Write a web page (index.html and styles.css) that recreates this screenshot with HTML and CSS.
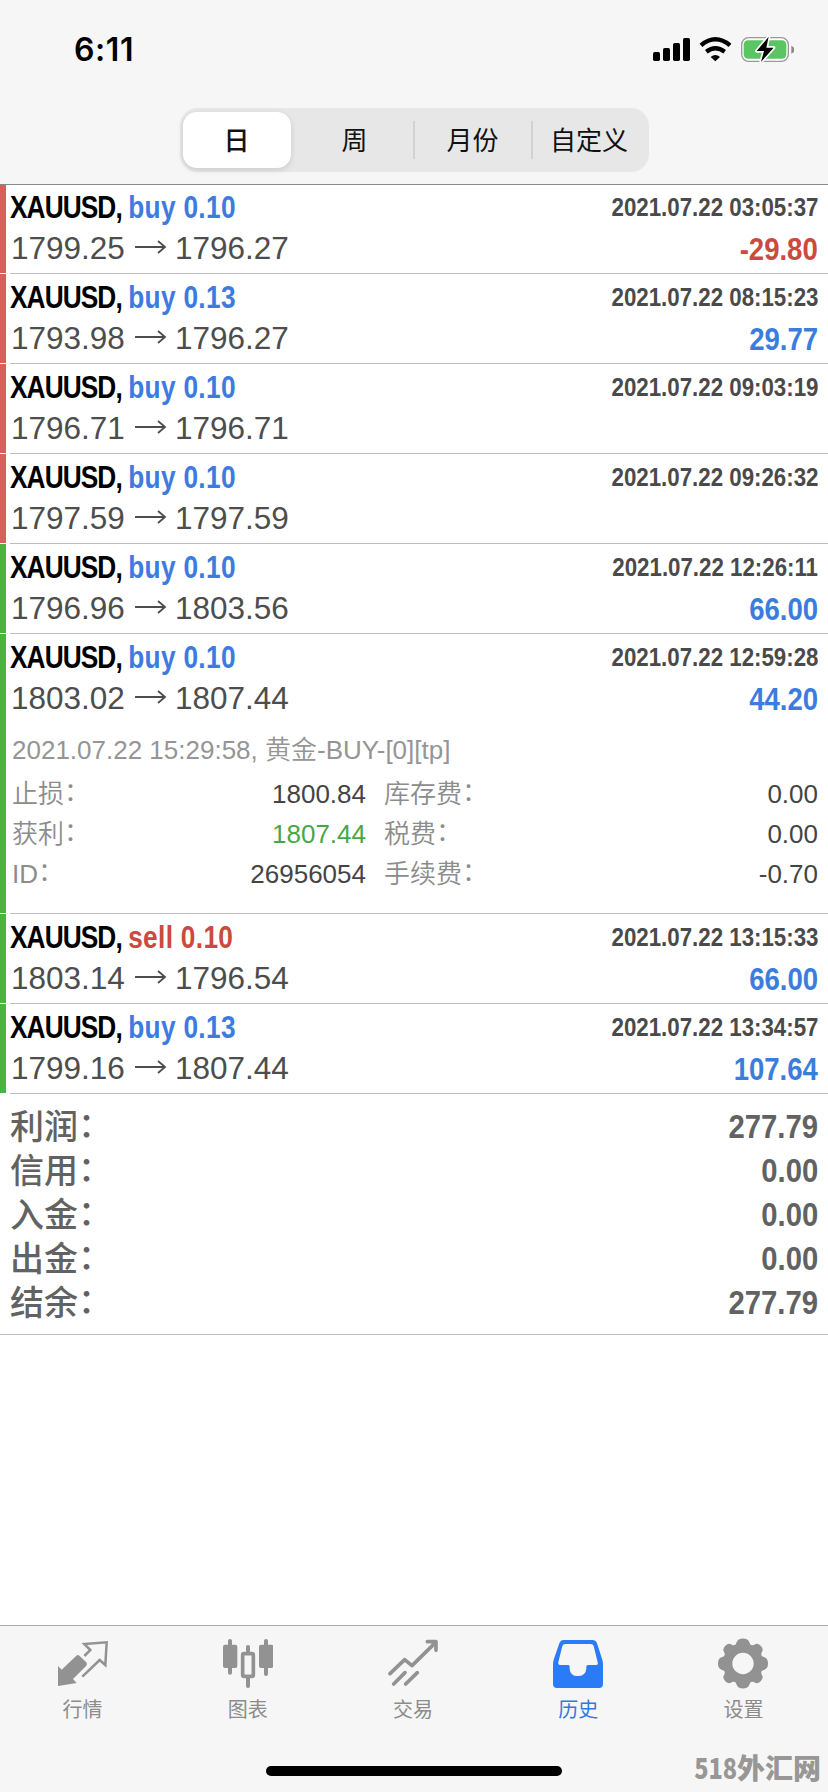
FILE: index.html
```html
<!DOCTYPE html>
<html lang="zh-CN">
<head>
<meta charset="utf-8">
<title>历史</title>
<link rel="stylesheet" href="styles.css">
</head>
<body>
<div class="app">
  <header class="header">
    <div class="status">
      <span class="clock">6:11</span>
      <svg class="status-icons" viewBox="717 108 423 78" width="141" height="26">
        <rect x="717" y="156" width="21" height="27" rx="5"/>
        <rect x="747" y="144" width="21" height="39" rx="5"/>
        <rect x="777" y="129" width="21" height="54" rx="5"/>
        <rect x="807" y="114" width="21" height="69" rx="5"/>
        <g fill="none" stroke="#000" stroke-width="13">
          <path d="M861 136Q904 100 948 136"/>
          <path d="M877 155Q904 134 932 155"/>
        </g>
        <path d="M890 171Q904 159 918 171L904 184Z"/>
        <rect x="983" y="113" width="140" height="71" rx="21" fill="#fff" stroke="#9a989c" stroke-width="4"/>
        <rect x="989" y="121" width="128" height="55" rx="13" fill="#5bc563"/>
        <path d="M1132 137Q1141 140 1141 149Q1141 158 1132 161Z" fill="#8b898d"/>
        <path d="M1064 110L1028 153H1050L1041 186L1079 143H1057Z" stroke="#fff" stroke-width="10" stroke-linejoin="round"/>
        <path d="M1064 110L1028 153H1050L1041 186L1079 143H1057Z"/>
      </svg>
    </div>
    <nav class="segments">
      <span class="segment selected">日</span>
      <span class="segment week">周</span>
      <span class="segment divided">月份</span>
      <span class="segment divided">自定义</span>
    </nav>
  </header>

  <main class="content">
    <section class="deal loss first">
      <div class="line"><span class="symbol">XAUUSD, <b class="buy">buy 0.10</b></span><span class="time">2021.07.22 03:05:37</span></div>
      <div class="line"><span class="prices">1799.25<svg class="arrow" viewBox="0 0 32 14"><path d="M0 7H30M23 1L30 7L23 13"/></svg>1796.27</span><span class="profit negative">-29.80</span></div>
    </section>
    <section class="deal loss">
      <div class="line"><span class="symbol">XAUUSD, <b class="buy">buy 0.13</b></span><span class="time">2021.07.22 08:15:23</span></div>
      <div class="line"><span class="prices">1793.98<svg class="arrow" viewBox="0 0 32 14"><path d="M0 7H30M23 1L30 7L23 13"/></svg>1796.27</span><span class="profit">29.77</span></div>
    </section>
    <section class="deal loss">
      <div class="line"><span class="symbol">XAUUSD, <b class="buy">buy 0.10</b></span><span class="time">2021.07.22 09:03:19</span></div>
      <div class="line"><span class="prices">1796.71<svg class="arrow" viewBox="0 0 32 14"><path d="M0 7H30M23 1L30 7L23 13"/></svg>1796.71</span></div>
    </section>
    <section class="deal loss">
      <div class="line"><span class="symbol">XAUUSD, <b class="buy">buy 0.10</b></span><span class="time">2021.07.22 09:26:32</span></div>
      <div class="line"><span class="prices">1797.59<svg class="arrow" viewBox="0 0 32 14"><path d="M0 7H30M23 1L30 7L23 13"/></svg>1797.59</span></div>
    </section>
    <section class="deal">
      <div class="line"><span class="symbol">XAUUSD, <b class="buy">buy 0.10</b></span><span class="time">2021.07.22 12:26:11</span></div>
      <div class="line"><span class="prices">1796.96<svg class="arrow" viewBox="0 0 32 14"><path d="M0 7H30M23 1L30 7L23 13"/></svg>1803.56</span><span class="profit">66.00</span></div>
    </section>
    <section class="deal expanded">
      <div class="line"><span class="symbol">XAUUSD, <b class="buy">buy 0.10</b></span><span class="time">2021.07.22 12:59:28</span></div>
      <div class="line"><span class="prices">1803.02<svg class="arrow" viewBox="0 0 32 14"><path d="M0 7H30M23 1L30 7L23 13"/></svg>1807.44</span><span class="profit">44.20</span></div>
      <p class="comment">2021.07.22 15:29:58, 黄金-BUY-[0][tp]</p>
      <div class="details">
        <span class="label">止损<i>：</i></span><span class="value">1800.84</span><span class="label">库存费<i>：</i></span><span class="value">0.00</span>
        <span class="label">获利<i>：</i></span><span class="value hit">1807.44</span><span class="label">税费<i>：</i></span><span class="value">0.00</span>
        <span class="label">ID<i>：</i></span><span class="value">26956054</span><span class="label">手续费<i>：</i></span><span class="value">-0.70</span>
      </div>
    </section>
    <section class="deal">
      <div class="line"><span class="symbol">XAUUSD, <b class="sell">sell 0.10</b></span><span class="time">2021.07.22 13:15:33</span></div>
      <div class="line"><span class="prices">1803.14<svg class="arrow" viewBox="0 0 32 14"><path d="M0 7H30M23 1L30 7L23 13"/></svg>1796.54</span><span class="profit">66.00</span></div>
    </section>
    <section class="deal">
      <div class="line"><span class="symbol">XAUUSD, <b class="buy">buy 0.13</b></span><span class="time">2021.07.22 13:34:57</span></div>
      <div class="line"><span class="prices">1799.16<svg class="arrow" viewBox="0 0 32 14"><path d="M0 7H30M23 1L30 7L23 13"/></svg>1807.44</span><span class="profit">107.64</span></div>
    </section>
    <section class="totals">
      <div class="total"><span class="name">利润<i>：</i></span><span class="sum">277.79</span></div>
      <div class="total"><span class="name">信用<i>：</i></span><span class="sum">0.00</span></div>
      <div class="total"><span class="name">入金<i>：</i></span><span class="sum">0.00</span></div>
      <div class="total"><span class="name">出金<i>：</i></span><span class="sum">0.00</span></div>
      <div class="total"><span class="name">结余<i>：</i></span><span class="sum">277.79</span></div>
    </section>
  </main>

  <footer class="tabbar">
    <nav class="tabs">
      <a class="tab">
        <svg class="icon" viewBox="171 84 150 153">
          <path d="M171 168L182 179L226 137Q231 133 236 138L256 157Q260 162 256 167L216 207L227 219L171 228Z"/>
          <path d="M250 138L268 120L250 102L317 97L313 165L296 150L244 200" fill="none" stroke="#929292" stroke-width="7.500"/>
        </svg>
        <span>行情</span>
      </a>
      <a class="tab">
        <svg class="icon" viewBox="669 84 150 153">
          <rect x="669" y="104" width="43" height="70" rx="6"/><rect x="684" y="87" width="12" height="107" rx="6"/>
          <rect x="777" y="104" width="43" height="70" rx="6"/><rect x="792" y="87" width="12" height="111" rx="6"/>
          <rect x="728" y="131" width="32" height="68" rx="4" fill="none" stroke="#929292" stroke-width="11"/>
          <path d="M744 111V126M744 204V228" stroke="#929292" stroke-width="12" stroke-linecap="round"/>
        </svg>
        <span>图表</span>
      </a>
      <a class="tab">
        <svg class="icon" viewBox="1164 84 150 153">
          <g fill="none" stroke="#929292" stroke-width="11" stroke-linecap="round" stroke-linejoin="round">
            <path d="M1170 191L1214 149L1236 167L1307 97M1282 95H1308V121"/>
            <path d="M1181 222L1215 188M1217 222L1252 188"/>
          </g>
        </svg>
        <span>交易</span>
      </a>
      <a class="tab active">
        <svg class="icon" viewBox="417 84 150 153">
          <path fill-rule="evenodd" d="M449 90H535Q545 90 549 100L564 146Q567 153 567 162V222Q567 234 555 234H429Q417 234 417 222V162Q417 153 420 146L436 100Q440 90 449 90ZM454 102Q447 102 445 108L433 157Q432 165 438 165H463Q467 165 467 170V176Q468 198 491 198Q515 198 517 176V170Q517 165 522 165H547Q553 165 551 157L539 108Q537 102 530 102Z"/>
        </svg>
        <span>历史</span>
      </a>
      <a class="tab">
        <svg class="icon" viewBox="-75 -76.500 150 153">
          <path fill-rule="evenodd" d="M-18 -66Q-14 -75 0 -75Q14 -75 18 -66L22 -57Q25 -54 30 -55L40 -59Q46 -60 53 -53Q60 -46 59 -40L55 -30Q54 -25 57 -22L66 -18Q75 -14 75 0Q75 14 66 18L57 22Q54 25 55 30L59 40Q60 46 53 53Q46 60 40 59L30 55Q25 54 22 57L18 66Q14 75 0 75Q-14 75 -18 66L-22 57Q-25 54 -30 55L-40 59Q-46 60 -53 53Q-60 46 -59 40L-55 30Q-54 25 -57 22L-66 18Q-75 14 -75 0Q-75 -14 -66 -18L-57 -22Q-54 -25 -55 -30L-59 -40Q-60 -46 -53 -53Q-46 -60 -40 -59L-30 -55Q-25 -54 -22 -57ZM0 -32A32 32 0 1 0 0 32A32 32 0 1 0 0 -32Z"/>
        </svg>
        <span>设置</span>
      </a>
    </nav>
    <div class="home-indicator"></div>
    <div class="watermark"><span class="watermark-number">518</span>外汇网</div>
  </footer>
</div>
</body>
</html>
```
FILE: styles.css
```css
* { box-sizing: border-box; }
body {
  margin: 0;
  background: #fff;
  font-family: "Liberation Sans", "Noto Sans CJK SC", sans-serif;
}
i { font-style: normal; }
.app {
  width: 828px;
  height: 1792px;
  display: flex;
  flex-direction: column;
  overflow: hidden;
}

/* Header */
.header {
  height: 185px;
  background: #f6f6f6;
  border-bottom: 1px solid #8a8a8a;
  display: flex;
  flex-direction: column;
  align-items: center;
}
.status {
  width: 100%;
  height: 108px;
  padding: 36px 34px 0 74px;
  display: flex;
  justify-content: space-between;
  align-items: flex-start;
}
.clock {
  font: 600 32px/27px Inter, sans-serif;
  letter-spacing: 0.6px;
}
.segments {
  width: 469px;
  height: 64px;
  padding: 4px 3px;
  border-radius: 18px;
  background: #e7e7e7;
  display: grid;
  grid-template-columns: 108px 122px 118px 1fr;
  align-items: center;
}
.segment {
  font: 400 26px/36px "Noto Sans CJK SC", sans-serif;
  text-align: center;
  color: #111;
}
.segment:not(.selected) { padding-bottom: 2px; }
.segment.selected {
  font-weight: 500;
  line-height: 54px;
  height: 56px;
  background: #fff;
  border-radius: 14px;
  box-shadow: 0 2px 6px rgba(0, 0, 0, .12);
}
.week { padding-left: 6px; }
.divided { border-left: 2px solid #d2d2d2; }

/* Deals */
.content { flex: 1; }
.deal {
  position: relative;
  height: 90px;
  padding: 3px 10px 0 10px;
}
.deal::before {
  content: "";
  position: absolute;
  left: 0;
  top: 0;
  bottom: 1px;
  width: 6px;
  background: #4ab344;
}
.deal::after {
  content: "";
  position: absolute;
  left: 10px;
  right: 0;
  bottom: 0;
  height: 1px;
  background: #bdbdbd;
}
.deal.loss::before { background: #d9605a; }
.deal.first { height: 89px; padding-top: 2px; }
.deal.expanded { height: 280px; }
.line {
  height: 41px;
  display: flex;
  justify-content: space-between;
  line-height: 41px;
  white-space: nowrap;
}
.symbol {
  font-size: 32px;
  font-weight: 700;
  letter-spacing: -1.1px;
  transform: scaleX(.82);
  transform-origin: left;
}
.symbol b { letter-spacing: 0.4px; }
.buy { color: #3d7be0; }
.sell { color: #cb4a40; }
.time {
  font-size: 26px;
  font-weight: 700;
  color: #4a4a4a;
  transform: scaleX(.857);
  transform-origin: right;
}
.prices { padding-left: 1px; font-size: 31.5px; color: #4d4d4d; }
.arrow {
  width: 32px;
  height: 14px;
  margin: 0 8px 5px 10px;
  fill: none;
  stroke: #4d4d4d;
  stroke-width: 1.8;
}
.profit {
  padding-top: 1px;
  font-size: 32px;
  font-weight: 700;
  color: #3b7ddd;
  transform: scaleX(.86);
  transform-origin: right;
}
.profit.negative { color: #cb4a40; }
.comment {
  margin: 11px 0 0 2px;
  font-size: 26px;
  font-weight: 350;
  line-height: 40px;
  color: #959595;
}
.details {
  margin-top: 4px;
  padding-left: 2px;
  display: grid;
  grid-template-columns: 150px 204px 170px 1fr;
  grid-auto-rows: 40px;
  line-height: 40px;
  font-size: 26px;
}
.label { font-weight: 350; color: #8c8c8c; }
.label:nth-child(4n + 3) { padding-left: 18px; }
.label i { vertical-align: 2px; line-height: 1; }
.value { text-align: right; color: #444; }
.value.hit { color: #48a846; }

/* Totals */
.totals {
  height: 241px;
  padding: 10px 10px 0;
  border-bottom: 1px solid #c0c0c0;
}
.total {
  height: 44px;
  display: flex;
  justify-content: space-between;
  font-size: 34px;
  font-weight: 500;
  line-height: 44px;
  color: #626262;
}
.name { padding-top: 1px; }
.total i { vertical-align: 2px; line-height: 1; }
.sum { font-weight: 700; transform: scaleX(.86); transform-origin: right; }

/* Tab bar */
.tabbar {
  position: relative;
  height: 167px;
  border-top: 1px solid #a9aaa9;
  background: #f6f6f6;
}
.tabs {
  padding: 12px 2px 0 0;
  display: grid;
  grid-template-columns: repeat(5, 1fr);
}
.tab {
  display: flex;
  flex-direction: column;
  align-items: center;
  font: 400 20px/28px "Noto Sans CJK SC", sans-serif;
  color: #8c8c8c;
  gap: 6px;
}
.icon { width: 50px; height: 51px; fill: #929292; }
.tab.active { color: #3478e0; }
.active .icon { fill: #2c7bf6; }
.home-indicator {
  position: absolute;
  left: 266px;
  top: 140px;
  width: 296px;
  height: 10px;
  border-radius: 5px;
  background: #000;
}
.watermark {
  position: absolute;
  right: 7px;
  bottom: 8px;
  display: flex;
  font: 900 28px/34px "Noto Sans CJK SC", sans-serif;
  color: #999796;
}
.watermark-number { transform: scaleX(.84); transform-origin: right; }
```
